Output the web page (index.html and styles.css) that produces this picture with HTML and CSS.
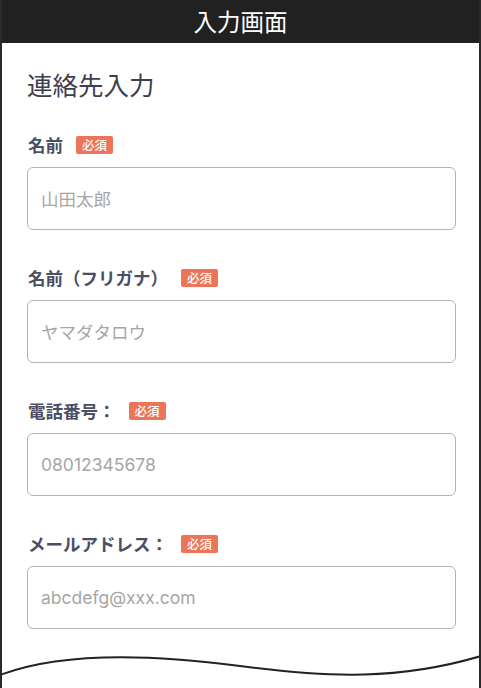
FILE: index.html
```
<!DOCTYPE html>
<html lang="ja">
<head>
<meta charset="utf-8">
<title>入力画面</title>
<link rel="stylesheet" href="styles.css">
</head>
<body>
<div class="frame">
  <header class="topbar">入力画面</header>
  <main class="content">
    <h1 class="title">連絡先入力</h1>
    <div class="field">
      <div class="label-row"><span class="label">名前</span><span class="badge">必須</span></div>
      <div class="input"><span class="placeholder">山田太郎</span></div>
    </div>
    <div class="field">
      <div class="label-row"><span class="label">名前（フリガナ）</span><span class="badge">必須</span></div>
      <div class="input"><span class="placeholder">ヤマダタロウ</span></div>
    </div>
    <div class="field">
      <div class="label-row"><span class="label">電話番号：</span><span class="badge">必須</span></div>
      <div class="input"><span class="placeholder">08012345678</span></div>
    </div>
    <div class="field">
      <div class="label-row"><span class="label">メールアドレス：</span><span class="badge">必須</span></div>
      <div class="input"><span class="placeholder">abcdefg@xxx.com</span></div>
    </div>
  </main>
  <svg class="wave" viewBox="0 0 481 48" width="481" height="48" aria-hidden="true">
    <path d="M0 35 C 60 12, 150 14, 240 26 S 400 40, 481 16 L481 48 L0 48 Z" fill="#ffffff"/>
    <path d="M0 35 C 60 12, 150 14, 240 26 S 400 40, 481 16" fill="none" stroke="#222222" stroke-width="2"/>
  </svg>
</div>
</body>
</html>
```
FILE: styles.css
```
html, body {
  margin: 0;
  padding: 0;
  background: #ffffff;
}
body {
  font-family: "Noto Sans CJK JP", sans-serif;
}
.frame {
  position: relative;
  width: 481px;
  height: 688px;
  box-sizing: border-box;
  border-left: 2px solid #2a2a2a;
  border-right: 2px solid #2a2a2a;
  overflow: hidden;
  background: #ffffff;
}
.topbar {
  height: 43px;
  margin: 0 -2px;
  background: #212121;
  color: #ffffff;
  font-size: 23.5px;
  line-height: 43px;
  text-align: center;
}
.content {
  padding: 26px 0 0 25px;
}
.title {
  margin: 0;
  font-size: 25.5px;
  font-weight: 400;
  line-height: 30px;
  color: #3d4050;
}
.field {
  width: 429px;
}
.title + .field {
  margin-top: 37px;
}
.field + .field {
  margin-top: 39px;
}
.label-row {
  display: flex;
  align-items: center;
  height: 18px;
  gap: 13px;
  margin-left: 1px;
}
.label {
  font-size: 17.5px;
  font-weight: 700;
  color: #4a4f63;
  line-height: 18px;
}
.badge {
  display: inline-block;
  height: 18px;
  padding: 0 6px;
  border-radius: 2px;
  background: #ec7459;
  color: #ffffff;
  font-size: 12.5px;
  font-weight: 500;
  line-height: 18px;
}
.input {
  margin-top: 13px;
  height: 63px;
  box-sizing: border-box;
  border: 1.5px solid #b3b3b3;
  border-radius: 6px;
  padding: 0 13px;
  display: flex;
  align-items: center;
}
.placeholder {
  font-family: Inter, "Noto Sans CJK JP", sans-serif;
  font-size: 17.5px;
  color: #a6a6a6;
}
.wave {
  position: absolute;
  left: -2px;
  bottom: 0;
  display: block;
}
```
